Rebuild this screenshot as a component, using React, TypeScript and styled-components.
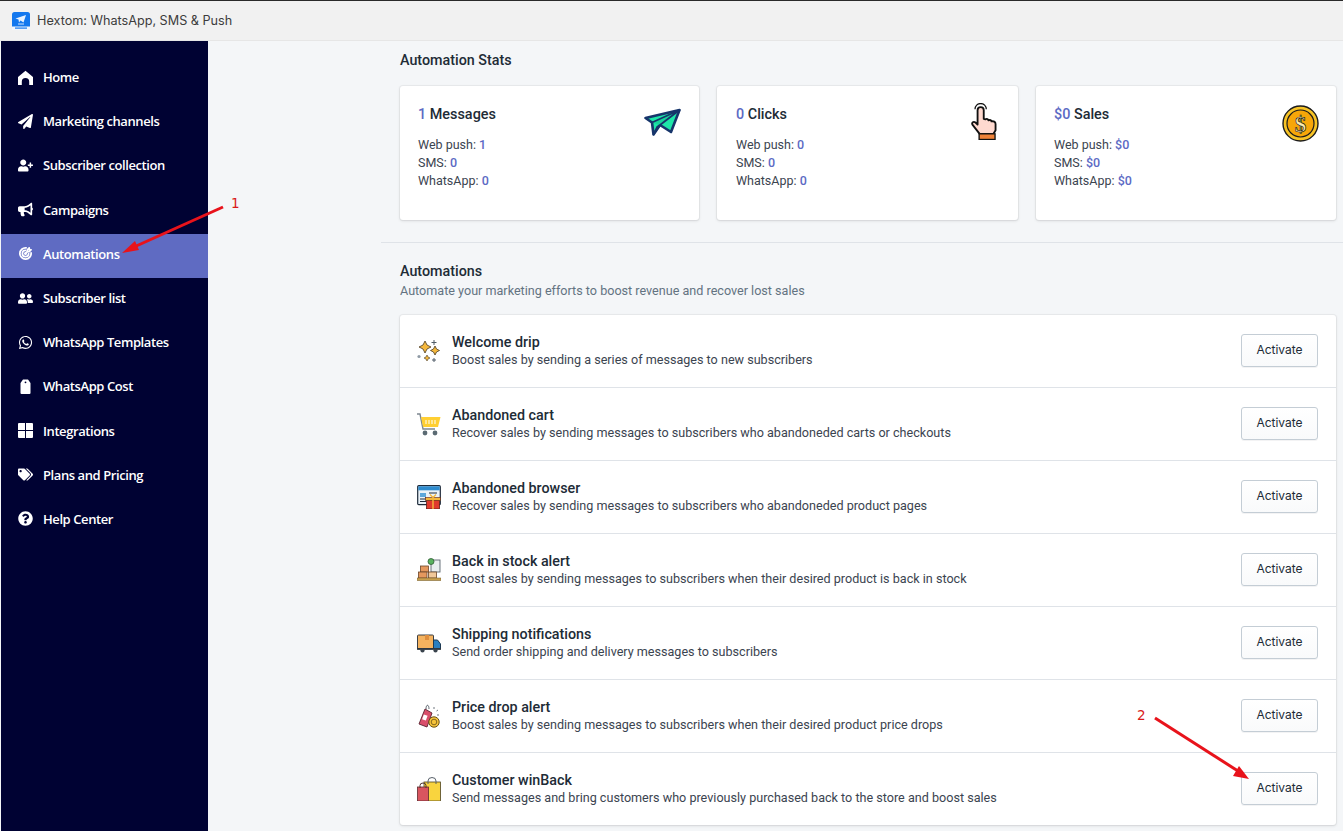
import React from "react";
import styled, { createGlobalStyle } from "styled-components";
import {
  FaPaperPlane, FaUserPlus, FaBullhorn, FaUserFriends, FaWhatsapp,
  FaTags, FaQuestionCircle,
} from "react-icons/fa";
import { TbTargetArrow } from "react-icons/tb";

const Global = createGlobalStyle`
  html, body { margin: 0; padding: 0; height: 831px; overflow: hidden; background: #f4f6f8; }
  * { box-sizing: border-box; }
`;

const Page = styled.div`
  position: relative;
  width: 1343px;
  height: 831px;
  overflow: hidden;
  display: flex;
  flex-direction: column;
  font-family: Roboto, "Liberation Sans", sans-serif;
  color: #212b36;
`;
const TopBar = styled.header`
  height: 41px;
  flex: none;
  display: flex;
  align-items: center;
  gap: 7px;
  padding: 0 0 0 12px;
  background: #f1f1f1;
  border-top: 1px solid #2a2a2a;
  border-bottom: 1px solid #e6e6e6;
`;
const AppTitle = styled.span`
  font-family: Inter, "Liberation Sans", sans-serif;
  font-size: 12.65px;
  color: #3c3c3c;
`;
const Body = styled.div`
  flex: 1;
  display: flex;
  min-height: 0;
`;
const Sidebar = styled.nav`
  width: 207px;
  margin-left: 1px;
  flex: none;
  background: #000233;
  padding-top: 16px;
`;
const NavItem = styled.div<{ $active?: boolean }>`
  height: 44.2px;
  display: flex;
  align-items: center;
  gap: 10px;
  padding: 0 0 4px 17px;
  color: #fff;
  background: ${(p) => (p.$active ? "#5f6bc2" : "transparent")};
  font-family: "Open Sans", "Noto Sans", sans-serif;
  font-size: 13px;
  font-weight: 600;
  letter-spacing: -0.42px;
  svg { flex: none; width: 15px; height: 15px; }
`;
const Main = styled.main`
  flex: 1;
  padding: 10px 7px 0 192px;
  min-width: 0;
`;
const SectionTitle = styled.h2`
  margin: 0;
  font-size: 14.3px;
  line-height: 18px;
  font-weight: 500;
  color: #212b36;
`;
const StatsGrid = styled.div`
  display: grid;
  grid-template-columns: 299px 301px 300px;
  column-gap: 18px;
  margin-top: 17px;
`;
const StatCard = styled.section`
  height: 134px;
  background: #fff;
  border-radius: 3px;
  box-shadow: 0 0 0 1px rgba(63, 63, 68, 0.05), 0 1px 3px rgba(63, 63, 68, 0.15);
  padding: 20px 18px;
  display: flex;
  justify-content: space-between;
  &:nth-child(2) { padding-left: 19px; }
`;
const StatTitle = styled.div`
  font-size: 14.4px;
  line-height: 18px;
  font-weight: 500;
  margin-bottom: 12px;
`;
const Accent = styled.span`
  color: #5c6ac4;
  font-weight: 500;
`;
const StatLine = styled.div`
  font-size: 12.5px;
  line-height: 18px;
  color: #3b4450;
`;
const StatIcon = styled.div<{ $top: number; $right: number }>`
  flex: none;
  margin-top: ${(p) => p.$top}px;
  margin-right: ${(p) => p.$right}px;
`;
const Divider = styled.hr`
  margin: 22px -7px 0 -19px;
  border: 0;
  border-top: 1px solid #dfe3e8;
`;
const SectionHead = styled.div`
  margin-top: 19px;
`;
const SectionSub = styled.div`
  margin-top: 1px;
  font-size: 12.6px;
  line-height: 19px;
  color: #637381;
`;
const ListCard = styled.section`
  margin-top: 15px;
  background: #fff;
  border-radius: 3px;
  box-shadow: 0 0 0 1px rgba(63, 63, 68, 0.05), 0 1px 3px rgba(63, 63, 68, 0.15);
`;
const Row = styled.div`
  height: 73px;
  display: flex;
  align-items: center;
  padding: 0 18px 0 17px;
  border-top: 1px solid #dfe3e8;
  &:first-child { border-top: 0; height: 72px; }
`;
const RowIcon = styled.div`
  width: 24px;
  height: 24px;
  flex: none;
  margin-right: 11px;
`;
const RowText = styled.div`
  flex: 1;
  min-width: 0;
`;
const RowTitle = styled.div`
  font-size: 14.3px;
  line-height: 17px;
  font-weight: 500;
  color: #212b36;
`;
const RowDesc = styled.div`
  font-size: 12.6px;
  line-height: 17px;
  color: #3b4450;
`;
const ActivateButton = styled.button`
  width: 77px;
  height: 33px;
  flex: none;
  margin-bottom: 2px;
  font-family: Inter, Roboto, sans-serif;
  font-size: 12px;
  color: #212b36;
  background: linear-gradient(#fff, #f9fafb);
  border: 1px solid #c4cdd5;
  border-radius: 3px;
  box-shadow: 0 1px 0 rgba(22, 29, 37, 0.05);
  padding: 0 0 2px;
`;
const Overlay = styled.svg`
  position: absolute;
  left: 0;
  top: 0;
  pointer-events: none;
`;
const Mark = styled.span<{ $x: number; $y: number }>`
  position: absolute;
  left: ${(p) => p.$x}px;
  top: ${(p) => p.$y}px;
  font-family: "DejaVu Sans", sans-serif;
  font-size: 13.5px;
  line-height: 16px;
  color: #d91a1a;
`;

const HomeIcon = () => (
  <svg viewBox="0 0 15 15">
    <path fillRule="evenodd" d="M7.500.8L15 7v8h-3.800v-3.300a3.700 3.700 0 0 0-7.400 0V15H0V7z" fill="currentColor" />
  </svg>
);
const BagIcon = () => (
  <svg viewBox="0 0 15 15">
    <path d="M5 .5h5l2.300 3.200a1 1 0 0 1 .2.600V14a1 1 0 0 1-1 1h-8a1 1 0 0 1-1-1V4.300a1 1 0 0 1 .2-.6z" fill="currentColor" />
    <circle cx="7.500" cy="3.300" r=".9" fill="#000233" />
  </svg>
);
const GridIcon = () => (
  <svg viewBox="0 0 15 15">
    <path d="M0 1a1 1 0 0 1 1-1h6v7H0zM8 0h6a1 1 0 0 1 1 1v6H8zM0 8h7v7H1a1 1 0 0 1-1-1zM8 8h7v6a1 1 0 0 1-1 1H8z" fill="currentColor" />
  </svg>
);

const Logo = () => (
  <svg width="18" height="18" viewBox="0 0 18 18">
    <rect width="18" height="18" rx="2.500" fill="#1478ee" />
    <path d="M3.500 6.500L14 3l-2.500 7.500-3-2-1.500 2-.5-3z" fill="#fff" opacity=".9" />
    <rect x="6" y="11.500" width="6" height="1" fill="#fff" opacity=".8" />
    <rect y="14.500" width="18" height="3.500" fill="#f3f7fd" />
    <rect x="3" y="15.500" width="12" height="1.200" fill="#1478ee" />
  </svg>
);

const Plane = () => (
  <svg width="37" height="29" viewBox="0 0 37 29">
    <path d="M1.500 10L35.500 2 27 24 16 17 9.500 26.500 8 14.500z" fill="#1ee6a8" stroke="#17356b" strokeWidth="2.600" strokeLinejoin="round" />
    <path d="M8 14.500L35.500 2 16 17" fill="#17d59b" stroke="#17356b" strokeWidth="1.800" strokeLinejoin="round" />
    <path d="M16 17l-6.500 9.500L13 19z" fill="#fff" stroke="#17356b" strokeWidth="1.600" strokeLinejoin="round" />
  </svg>
);
const Hand = () => (
  <svg width="26" height="37" viewBox="1 0 24.500 36">
    <path d="M4.500 6a5.500 5.500 0 0 1 11 0" fill="none" stroke="#111" strokeWidth="1.200" />
    <path d="M7 7a3 3 0 0 1 6 0v8.500l1.500.4c1.500-.8 3-.3 3 1 1.500-.8 3-.3 3 1 2-.5 4 .1 4 2.600v6l-2 3.500H9L2 21c-1-2 1-3.500 3-2l2 2z" fill="#ffd9cf" stroke="#111" strokeWidth="1.800" strokeLinejoin="round" />
    <rect x="8.500" y="30" width="15.500" height="5.500" fill="#f08238" stroke="#111" strokeWidth="1.300" />
  </svg>
);
const Coin = () => (
  <svg width="37" height="37" viewBox="0 0 37 37">
    <circle cx="18.500" cy="18.500" r="17.500" fill="#f7c325" stroke="#1b1b1b" strokeWidth="1.400" />
    <circle cx="18.500" cy="18.500" r="13.500" fill="#f6a609" stroke="#1b1b1b" strokeWidth="1.200" />
    <text x="18.500" y="26.500" textAnchor="middle" fontFamily="Liberation Serif, serif" fontSize="23" fontWeight="700" fill="#fdeeb0" stroke="#1b1b1b" strokeWidth=".7">$</text>
  </svg>
);

const Sparkles = () => (
  <svg width="24" height="24" viewBox="0 0 24 24">
    <path d="M8 2l2 4 4 2-4 2-2 4-2-4-4-2 4-2z" fill="#f5b83d" stroke="#4a3a20" strokeWidth=".8" />
    <path d="M18 7l1.500 3 3 1.500-3 1.500-1.500 3-1.500-3-3-1.500 3-1.500z" fill="#f5b83d" stroke="#4a3a20" strokeWidth=".8" />
    <path d="M10 16l1 2 2 1-2 1-1 2-1-2-2-1 2-1z" fill="#f5b83d" stroke="#4a3a20" strokeWidth=".6" />
    <circle cx="2" cy="17.500" r="1.600" fill="#8f9aa5" />
    <path d="M17 1v5M14.500 3.500h5M17 19v4M15 21h4" stroke="#4f5b66" strokeWidth="1" />
  </svg>
);
const Cart = () => (
  <svg width="24" height="24" viewBox="0 0 24 24">
    <path d="M0 2h3l3 15h12" fill="none" stroke="#7d8790" strokeWidth="1.400" />
    <path d="M4 5h19.500l-2.500 10H6z" fill="#ffcf33" />
    <path d="M9 8v4M12 8v4M15 8v4M18 8v4" stroke="#fff" strokeWidth="1" />
    <circle cx="8" cy="21" r="2.400" fill="#5b6b73" />
    <circle cx="18" cy="21" r="2.400" fill="#5b6b73" />
  </svg>
);
const BrowserGift = () => (
  <svg width="24" height="24" viewBox="0 0 24 24">
    <rect x=".7" y=".7" width="22.600" height="19" rx="1" fill="#eaf2f8" stroke="#1d2a3a" strokeWidth="1.200" />
    <rect x="1.300" y="1.300" width="21.400" height="4" fill="#2e8ccf" />
    <rect x="3" y="8" width="6" height="4" fill="#5ba7dc" />
    <path d="M3 14h6M3 16.500h6M12 8h8" stroke="#1d2a3a" strokeWidth="1" />
    <rect x="9.500" y="15" width="13" height="9" fill="#e0392d" stroke="#5a1d18" strokeWidth=".8" />
    <rect x="8.500" y="12.500" width="15" height="3" fill="#f4b73a" stroke="#5a1d18" strokeWidth=".6" />
    <path d="M16 12.500l-3-3M16 12.500l3-3M16 12v12" stroke="#f4b73a" strokeWidth="1.400" />
  </svg>
);
const Stock = () => (
  <svg width="24" height="24" viewBox="0 0 24 24">
    <rect x="14" y="2" width="9" height="12" fill="#e9edf0" stroke="#5c6670" strokeWidth=".9" />
    <circle cx="14" cy="3.500" r="3" fill="#59b260" stroke="#2e5b33" strokeWidth=".8" />
    <rect x="3.500" y="8" width="8" height="6" fill="#e5985e" stroke="#6b4528" strokeWidth=".8" />
    <rect x="1.500" y="14" width="8.500" height="6" fill="#e5985e" stroke="#6b4528" strokeWidth=".8" />
    <rect x="11.500" y="14" width="8" height="6" fill="#f0c89a" stroke="#6b4528" strokeWidth=".8" />
    <rect y="20" width="24" height="2.600" fill="#c8a04f" stroke="#6f5a2b" strokeWidth=".5" />
  </svg>
);
const Truck = () => (
  <svg width="24" height="24" viewBox="0 0 24 24">
    <rect x=".5" y="4" width="16" height="14" rx="1" fill="#f5b35f" stroke="#3a3f45" strokeWidth="1" />
    <rect x="8" y="4" width="4" height="5" fill="#e08f3d" />
    <path d="M16.500 9h4l3 4v5h-7z" fill="#2a7fc0" stroke="#1d3b55" strokeWidth="1" />
    <rect y="17" width="24" height="1.800" fill="#2d3740" />
    <circle cx="5.500" cy="19.500" r="2.100" fill="#39434c" />
    <circle cx="18.500" cy="19.500" r="2.100" fill="#39434c" />
  </svg>
);
const PriceTag = () => (
  <svg width="24" height="24" viewBox="0 0 24 24">
    <path d="M8 5l7 4-5 14-8-3z" fill="#d94f6b" stroke="#5b2230" strokeWidth=".9" />
    <rect x="6" y="11" width="4" height="5" fill="#fff" transform="rotate(20 8 13)" />
    <path d="M9 5c0-5 3-5 3 0" fill="none" stroke="#4c5660" strokeWidth=".9" />
    <circle cx="17" cy="18" r="5.200" fill="#f5c33b" stroke="#6a5218" strokeWidth="1" />
    <circle cx="17" cy="18" r="2.800" fill="none" stroke="#6a5218" strokeWidth=".8" />
    <path d="M17 3v2M21 6l-1.500 1M22 11h-2" stroke="#4c5660" strokeWidth=".8" />
  </svg>
);
const Bags = () => (
  <svg width="24" height="24" viewBox="0 0 24 24">
    <rect x="7" y="5" width="16.500" height="19" fill="#f9d43e" stroke="#4d4320" strokeWidth=".8" />
    <path d="M11 7V4a4 3.500 0 0 1 8 0v3" fill="none" stroke="#59626b" strokeWidth="1" />
    <rect x=".5" y="10" width="11" height="14" fill="#d9555f" stroke="#5e2a2f" strokeWidth=".8" />
    <path d="M3 11V8.500a3 2.500 0 0 1 6 0V11" fill="none" stroke="#4d3530" strokeWidth="1" />
  </svg>
);

const nav = [
  { label: "Home", icon: <HomeIcon /> },
  { label: "Marketing channels", icon: <FaPaperPlane /> },
  { label: "Subscriber collection", icon: <FaUserPlus /> },
  { label: "Campaigns", icon: <FaBullhorn /> },
  { label: "Automations", icon: <TbTargetArrow strokeWidth={2.8} />, active: true },
  { label: "Subscriber list", icon: <FaUserFriends /> },
  { label: "WhatsApp Templates", icon: <FaWhatsapp /> },
  { label: "WhatsApp Cost", icon: <BagIcon /> },
  { label: "Integrations", icon: <GridIcon /> },
  { label: "Plans and Pricing", icon: <FaTags /> },
  { label: "Help Center", icon: <FaQuestionCircle /> },
];

const stats = [
  { head: "1", name: "Messages", vals: ["1", "0", "0"], icon: <Plane />, top: 2, right: 0 },
  { head: "0", name: "Clicks", vals: ["0", "0", "0"], icon: <Hand />, top: -3, right: 3 },
  { head: "$0", name: "Sales", vals: ["$0", "$0", "$0"], icon: <Coin />, top: -1, right: -1 },
];
const channels = ["Web push", "SMS", "WhatsApp"];

const automations = [
  { t: "Welcome drip", d: "Boost sales by sending a series of messages to new subscribers", i: <Sparkles /> },
  { t: "Abandoned cart", d: "Recover sales by sending messages to subscribers who abandoneded carts or checkouts", i: <Cart /> },
  { t: "Abandoned browser", d: "Recover sales by sending messages to subscribers who abandoneded product pages", i: <BrowserGift /> },
  { t: "Back in stock alert", d: "Boost sales by sending messages to subscribers when their desired product is back in stock", i: <Stock /> },
  { t: "Shipping notifications", d: "Send order shipping and delivery messages to subscribers", i: <Truck /> },
  { t: "Price drop alert", d: "Boost sales by sending messages to subscribers when their desired product price drops", i: <PriceTag /> },
  { t: "Customer winBack", d: "Send messages and bring customers who previously purchased back to the store and boost sales", i: <Bags /> },
];

export default function App() {
  return (
    <Page>
      <Global />
      <TopBar>
        <Logo />
        <AppTitle>Hextom: WhatsApp, SMS &amp; Push</AppTitle>
      </TopBar>
      <Body>
        <Sidebar>
          {nav.map((n) => (
            <NavItem key={n.label} $active={n.active}>
              {n.icon}
              <span>{n.label}</span>
            </NavItem>
          ))}
        </Sidebar>
        <Main>
          <SectionTitle>Automation Stats</SectionTitle>
          <StatsGrid>
            {stats.map((s) => (
              <StatCard key={s.name}>
                <div>
                  <StatTitle>
                    <Accent>{s.head}</Accent> {s.name}
                  </StatTitle>
                  {channels.map((c, i) => (
                    <StatLine key={c}>
                      {c}: <Accent>{s.vals[i]}</Accent>
                    </StatLine>
                  ))}
                </div>
                <StatIcon $top={s.top} $right={s.right}>{s.icon}</StatIcon>
              </StatCard>
            ))}
          </StatsGrid>
          <Divider />
          <SectionHead>
            <SectionTitle>Automations</SectionTitle>
            <SectionSub>Automate your marketing efforts to boost revenue and recover lost sales</SectionSub>
          </SectionHead>
          <ListCard>
            {automations.map((a) => (
              <Row key={a.t}>
                <RowIcon>{a.i}</RowIcon>
                <RowText>
                  <RowTitle>{a.t}</RowTitle>
                  <RowDesc>{a.d}</RowDesc>
                </RowText>
                <ActivateButton>Activate</ActivateButton>
              </Row>
            ))}
          </ListCard>
        </Main>
      </Body>
      <Overlay width="1343" height="831" viewBox="0 0 1343 831">
        <path d="M223 207L134 247" stroke="#e8131b" strokeWidth="3" fill="none" />
        <path d="M122 253l13-12 4 9z" fill="#e8131b" />
        <path d="M1155 718L1238 771" stroke="#e8131b" strokeWidth="3" fill="none" />
        <path d="M1249 779l-16-3 6-10z" fill="#e8131b" />
      </Overlay>
      <Mark $x={231} $y={195}>1</Mark>
      <Mark $x={1137} $y={707}>2</Mark>
    </Page>
  );
}
